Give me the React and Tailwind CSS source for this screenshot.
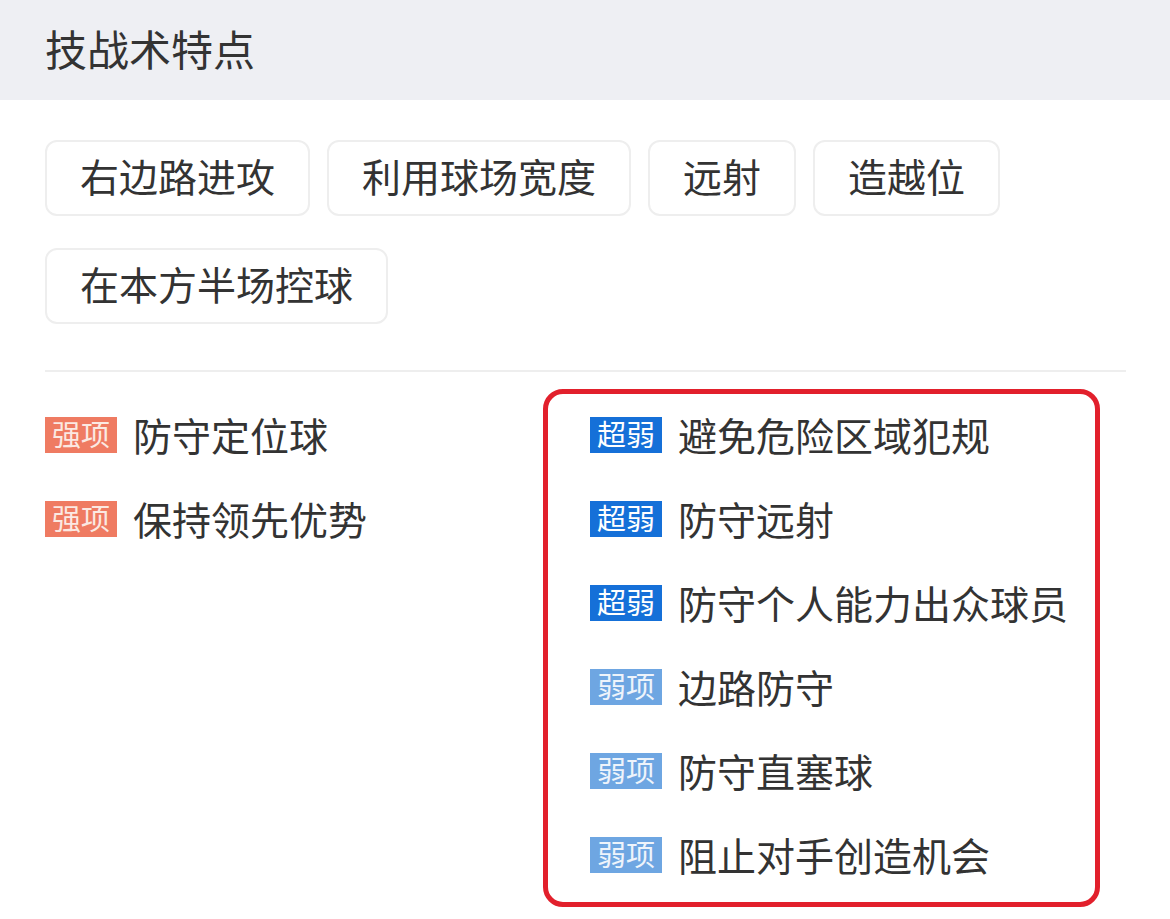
import React from "react";

const FONT = { fontFamily: '"Noto Sans CJK SC", "Noto Sans", sans-serif' };

const chipsRow = ["右边路进攻", "利用球场宽度", "远射", "造越位", "在本方半场控球"];

const strengths = ["防守定位球", "保持领先优势"];

const weaknesses = [
  { tag: "超弱", text: "避免危险区域犯规", strong: true },
  { tag: "超弱", text: "防守远射", strong: true },
  { tag: "超弱", text: "防守个人能力出众球员", strong: true },
  { tag: "弱项", text: "边路防守", strong: false },
  { tag: "弱项", text: "防守直塞球", strong: false },
  { tag: "弱项", text: "阻止对手创造机会", strong: false },
];

function Row({ tag, text, badgeClass }) {
  return (
    <div className="flex h-[84px] items-center pb-[5px]">
      <span
        className={`flex h-[36px] w-[72px] items-center justify-center pb-[3px] text-[29px] leading-none ${badgeClass}`}
      >
        {tag}
      </span>
      <span className="ml-[16px] text-[39px] leading-none text-[#333333]">{text}</span>
    </div>
  );
}

export default function App() {
  return (
    <div className="min-h-[919px] w-[1170px] overflow-hidden bg-white" style={FONT}>
      <div className="flex h-[100px] items-center bg-[#eeeff3] pb-[5px] pl-[45px]">
        <span className="text-[42px] leading-none text-[#333333]">技战术特点</span>
      </div>
      <div className="px-[45px]">
        <div className="flex flex-wrap gap-x-[17px] gap-y-[32px] pt-[40px]">
          {chipsRow.map((c) => (
            <div
              key={c}
              className="flex h-[76px] items-center rounded-[12px] border-2 border-[#eeeeee] px-[33px] pb-[6px] text-[39px] leading-none text-[#333333]"
            >
              {c}
            </div>
          ))}
        </div>
        <div className="mt-[46px] h-[2px] w-[1081px] bg-[#eeeeee]" />
        <div className="mt-[17px] flex">
          <div className="w-[498px] pt-[6px]">
            {strengths.map((s) => (
              <Row key={s} tag="强项" text={s} badgeClass="bg-[#ef7b62] text-[#fbe9e2]" />
            ))}
          </div>
          <div className="w-[557px] rounded-[20px] border-[5px] border-[#e2202c] pb-[3px] pl-[42px] pt-[1px]">
            {weaknesses.map((w) => (
              <Row
                key={w.text}
                tag={w.tag}
                text={w.text}
                badgeClass={w.strong ? "bg-[#1570d8] text-white" : "bg-[#6ea6e2] text-[#eef4fb]"}
              />
            ))}
          </div>
        </div>
      </div>
    </div>
  );
}
